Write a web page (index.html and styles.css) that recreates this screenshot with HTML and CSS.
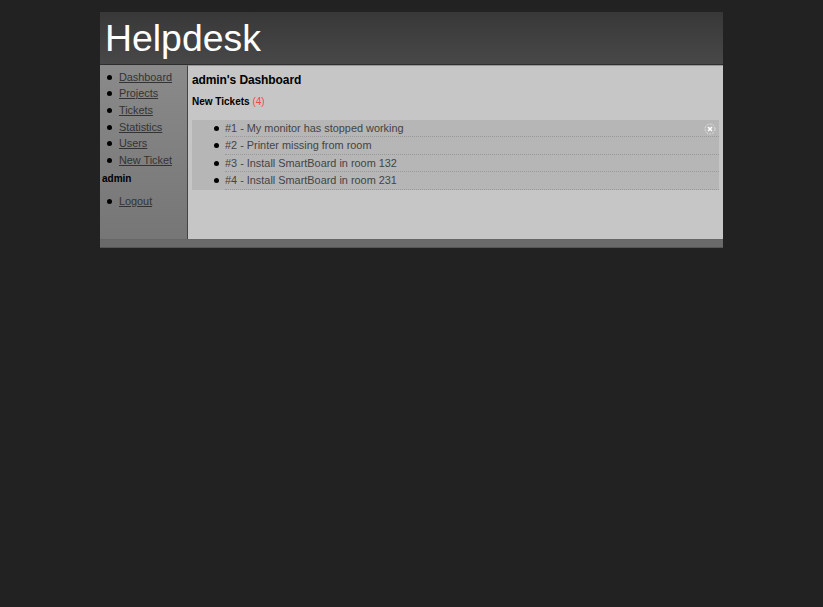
FILE: index.html
```html
<!DOCTYPE html>
<html lang="en">
<head>
<meta charset="utf-8">
<title>Helpdesk</title>
<link rel="stylesheet" href="styles.css">
</head>
<body>
<div class="wrap">
  <header class="header"><h1 class="title">Helpdesk</h1></header>
  <div class="main">
    <nav class="side">
      <ul class="menu">
        <li><a href="#">Dashboard</a></li>
        <li><a href="#">Projects</a></li>
        <li><a href="#">Tickets</a></li>
        <li><a href="#">Statistics</a></li>
        <li><a href="#">Users</a></li>
        <li><a href="#">New Ticket</a></li>
      </ul>
      <div class="user">admin</div>
      <ul class="menu">
        <li><a href="#">Logout</a></li>
      </ul>
    </nav>
    <main class="content">
      <h2 class="heading">admin's Dashboard</h2>
      <h3 class="sub">New Tickets <span class="count">(4)</span></h3>
      <ul class="tickets">
        <li class="ticket">#1 - My monitor has stopped working
          <svg class="close" viewBox="0 0 12 12" width="12" height="12" aria-hidden="true">
            <circle cx="6" cy="6" r="5" fill="none" stroke="#ddd" stroke-width="1" stroke-dasharray="2.2 1"/>
            <path d="M4 4l4 4M8 4l-4 4" stroke="#fff" stroke-width="1.6"/>
          </svg>
        </li>
        <li class="ticket">#2 - Printer missing from room</li>
        <li class="ticket">#3 - Install SmartBoard in room 132</li>
        <li class="ticket">#4 - Install SmartBoard in room 231</li>
      </ul>
    </main>
  </div>
  <div class="foot"></div>
</div>
</body>
</html>
```
FILE: styles.css
```css
* { box-sizing: border-box; }
html, body { margin: 0; padding: 0; }
body {
  height: 607px;
  background: #222;
  font-family: "Liberation Sans", Arial, sans-serif;
  font-size: 10.9px;
  color: #000;
  overflow: hidden;
}
.wrap {
  width: 623px;
  margin: 12px 0 0 100px;
  border-bottom: 1px solid #555;
}
.header {
  height: 53px;
  padding-left: 5px;
  background: linear-gradient(#383838, #484848);
  border-bottom: 1px solid #2e2e2e;
}
.title {
  margin: 0;
  font-size: 37.4px;
  font-weight: 400;
  line-height: 52px;
  color: #fff;
}
.main { display: flex; height: 174px; }
.side {
  width: 88px;
  padding-top: 2.6px;
  background: linear-gradient(#8a8a8a, #767676);
  border-right: 1px solid #444;
  border-top: 1px solid #888;
}
.menu { margin: 0; padding: 0 0 0 19px; list-style: none; }
.menu li { position: relative; height: 16.7px; line-height: 16.7px; }
.menu li::before,
.ticket::before {
  content: "";
  position: absolute;
  width: 5px;
  height: 5px;
  border-radius: 50%;
  background: #000;
}
.menu li::before { left: -12px; top: 6px; }
.menu a { color: #333; letter-spacing: -0.03px; }
.user { margin: 3px 0 7px 2px; font-size: 10px; font-weight: 700; line-height: 14px; }
.content {
  flex: 1;
  padding: 0 4px;
  background: #c6c6c6;
  border-top: 1px solid #999;
}
.heading { margin: 7px 0 0; font-size: 12px; letter-spacing: -0.1px; line-height: 15px; font-weight: 700; }
.sub { margin: 7px 0 0; font-size: 10px; line-height: 14px; font-weight: 700; }
.count { font-weight: 400; color: #f44; }
.tickets {
  margin: 11px 0 0;
  padding: 0 0 0 33px;
  background: #b6b6b6;
  color: #444;
  list-style: none;
}
.ticket {
  position: relative;
  height: 17.4px;
  line-height: 16.4px;
  border-bottom: 1px dotted #999;
}
.ticket::before { left: -11.5px; top: 6px; }
.close { position: absolute; right: 3px; top: 3px; }
.foot { height: 8px; background: #6a6a6a; border-top: 1px solid #666; }
```
